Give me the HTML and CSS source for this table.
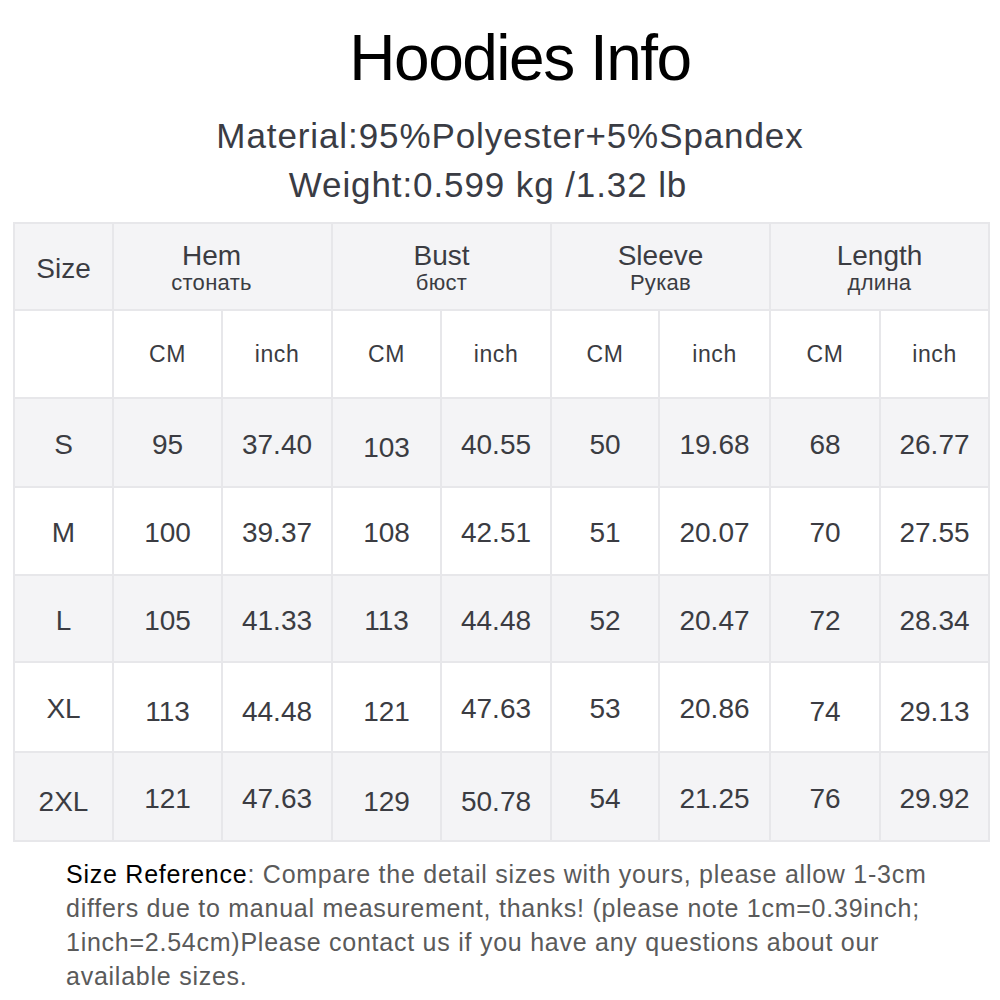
FILE: index.html
```html
<!DOCTYPE html>
<html lang="en">
<head>
<meta charset="utf-8">
<title>Hoodies Info</title>
<link rel="stylesheet" href="styles.css">
</head>
<body>
<div class="page">
  <h1 class="title">Hoodies Info</h1>
  <div class="info">
    <p class="info-line">Material:95%Polyester+5%Spandex</p>
    <p class="info-line weight">Weight:0.599 kg /1.32 lb</p>
  </div>

  <div class="size-table">
    <div class="cell head">Size</div>
    <div class="cell head span2 shift"><span class="en">Hem</span><span class="ru">стонать</span></div>
    <div class="cell head span2"><span class="en">Bust</span><span class="ru">бюст</span></div>
    <div class="cell head span2"><span class="en">Sleeve</span><span class="ru">Рукав</span></div>
    <div class="cell head span2"><span class="en">Length</span><span class="ru">длина</span></div>

    <div class="cell unit"></div>
    <div class="cell unit">CM</div><div class="cell unit">inch</div>
    <div class="cell unit">CM</div><div class="cell unit">inch</div>
    <div class="cell unit">CM</div><div class="cell unit">inch</div>
    <div class="cell unit">CM</div><div class="cell unit">inch</div>

    <div class="cell grey">S</div>
    <div class="cell grey">95</div><div class="cell grey">37.40</div>
    <div class="cell grey low">103</div><div class="cell grey">40.55</div>
    <div class="cell grey">50</div><div class="cell grey">19.68</div>
    <div class="cell grey">68</div><div class="cell grey">26.77</div>

    <div class="cell">M</div>
    <div class="cell">100</div><div class="cell">39.37</div>
    <div class="cell">108</div><div class="cell">42.51</div>
    <div class="cell">51</div><div class="cell">20.07</div>
    <div class="cell">70</div><div class="cell">27.55</div>

    <div class="cell grey">L</div>
    <div class="cell grey">105</div><div class="cell grey">41.33</div>
    <div class="cell grey">113</div><div class="cell grey">44.48</div>
    <div class="cell grey">52</div><div class="cell grey">20.47</div>
    <div class="cell grey">72</div><div class="cell grey">28.34</div>

    <div class="cell">XL</div>
    <div class="cell low">113</div><div class="cell low">44.48</div>
    <div class="cell low">121</div><div class="cell">47.63</div>
    <div class="cell">53</div><div class="cell">20.86</div>
    <div class="cell low">74</div><div class="cell low">29.13</div>

    <div class="cell grey low">2XL</div>
    <div class="cell grey">121</div><div class="cell grey">47.63</div>
    <div class="cell grey low">129</div><div class="cell grey low">50.78</div>
    <div class="cell grey">54</div><div class="cell grey">21.25</div>
    <div class="cell grey">76</div><div class="cell grey">29.92</div>
  </div>

  <p class="note"><span class="note-label">Size Reference</span>: Compare the detail sizes with yours, please allow 1-3cm differs due to manual measurement, thanks! (please note 1cm=0.39inch; 1inch=2.54cm)Please contact us if you have any questions about our available sizes.</p>
</div>
</body>
</html>
```

FILE: styles.css
```css
html, body {
  margin: 0;
  padding: 0;
  background: #ffffff;
}

body {
  font-family: "Liberation Sans", Arial, sans-serif;
}

.page {
  width: 1000px;
  height: 1000px;
  padding-top: 26px;
  box-sizing: border-box;
  overflow: hidden;
}

.title {
  margin: 0;
  padding-left: 40px;
  font-size: 64px;
  line-height: 64px;
  font-weight: normal;
  letter-spacing: -1.5px;
  text-align: center;
  color: #000000;
}

.info {
  margin-top: 21px;
  padding-left: 20px;
}

.info-line {
  margin: 0;
  font-size: 35px;
  line-height: 49px;
  letter-spacing: 0.9px;
  text-align: center;
  color: #3a3c44;
}

.info-line.weight {
  padding-right: 44px;
}

.size-table {
  margin: 13px 0 0 13px;
  width: 977px;
  box-sizing: border-box;
  padding: 2px;
  gap: 2px;
  background: #e7e7ea;
  display: grid;
  grid-template-columns: 97px 107px 108px 107px 108px 106px 109px 108px 107px;
  grid-template-rows: 85px 86px 87px 86px 85px 88px 87px;
}

.cell {
  display: flex;
  flex-direction: column;
  align-items: center;
  justify-content: center;
  background: #ffffff;
  color: #3b3c42;
  font-size: 28px;
  padding-top: 4px;
  box-sizing: border-box;
}

.cell.low {
  padding-top: 10px;
}

.head {
  background: #f4f4f6;
  padding-top: 4px;
}

.head.shift {
  padding-right: 22px;
}

.span2 {
  grid-column: span 2;
}

.en {
  font-size: 28px;
  line-height: 28px;
}

.ru {
  font-size: 22px;
  line-height: 25px;
  letter-spacing: 0.3px;
}

.unit {
  font-size: 23px;
  letter-spacing: 0.6px;
  padding-top: 0;
}

.grey {
  background: #f4f4f6;
}

.note {
  margin: 15px 0 0 66px;
  width: 880px;
  font-size: 25px;
  line-height: 34px;
  letter-spacing: 0.75px;
  color: #5a5a5a;
}

.note-label {
  color: #000000;
}
```
